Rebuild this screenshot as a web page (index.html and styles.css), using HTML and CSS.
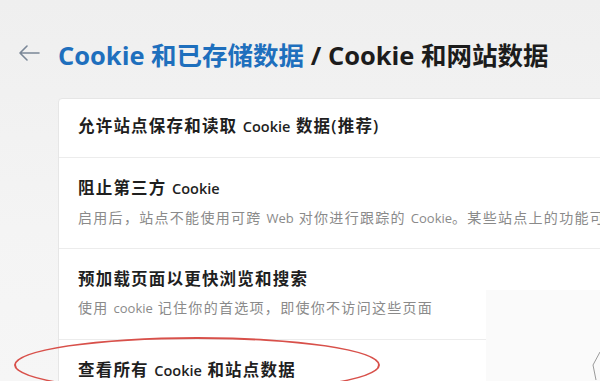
FILE: index.html
```html
<!DOCTYPE html>
<html lang="zh-CN">
<head>
<meta charset="utf-8">
<link rel="stylesheet" href="styles.css">
</head>
<body>
<div class="page">
  <header class="header">
    <svg class="back" width="22" height="16" viewBox="0 0 22 16"><path d="M9 1 L2 8 L9 15 M2 8 H21" fill="none" stroke="#7a8797" stroke-width="1.6" stroke-linecap="round" stroke-linejoin="round"/></svg>
    <h1 class="title"><span class="crumb">Cookie 和已存储数据</span> / Cookie 和网站数据</h1>
  </header>
  <section class="card">
    <div class="row row-single">
      <div class="row-title">允许站点保存和读取 <span class="en">Cookie</span> 数据(推荐)</div>
    </div>
    <div class="row">
      <div class="row-title">阻止第三方 <span class="en">Cookie</span></div>
      <div class="row-desc">启用后，站点不能使用可跨 <span class="en">Web</span> 对你进行跟踪的 <span class="en">Cookie</span>。某些站点上的功能可能会中断。</div>
    </div>
    <div class="row">
      <div class="row-title">预加载页面以更快浏览和搜索</div>
      <div class="row-desc">使用 <span class="en">cookie</span> 记住你的首选项，即使你不访问这些页面</div>
    </div>
    <div class="row row-single">
      <div class="row-title">查看所有 <span class="en">Cookie</span> 和站点数据</div>
    </div>
  </section>
</div>
<div class="overlay">
  <svg class="corner" width="10" height="30" viewBox="0 0 10 30"><path d="M10 1 L3 14 L6 29" fill="none" stroke="#9a9a9a" stroke-width="1"/></svg>
</div>
<div class="mark"></div>
</body>
</html>
```

FILE: styles.css
```css
html, body {
  margin: 0;
  padding: 0;
}
body {
  width: 600px;
  height: 381px;
  overflow: hidden;
  position: relative;
  background: linear-gradient(#efefef, #f4f4f4 60%, #f6f6f6);
  font-family: "Open Sans", "Noto Sans CJK SC", sans-serif;
  color: #1b1b1b;
}
.page {
  padding-top: 36px;
  overflow: hidden;
}
.header {
  display: flex;
  align-items: center;
  height: 34px;
  padding-left: 18px;
}
.back {
  flex: none;
}
.title {
  margin: 0 0 0 18px;
  font-size: 25.5px;
  font-weight: 700;
  white-space: nowrap;
  color: #1c1c1c;
}
.crumb {
  color: #1e6fbd;
}
.card {
  margin: 28px -40px 0 58px;
  background: #fff;
  border: 1px solid #e6e6e6;
  border-radius: 4px;
}
.row {
  padding: 19px 20px 0 19px;
  height: 71px;
  border-top: 1px solid #ececec;
  white-space: nowrap;
  overflow: hidden;
}
.row:first-child {
  border-top: none;
  padding-top: 16px;
  height: 42px;
}
.row-single {
  height: 39px;
}
.row-title {
  font-size: 16.5px;
  letter-spacing: 1.2px;
  font-weight: 600;
  line-height: 22px;
  color: #1f1f1f;
}
.row-title .en {
  font-size: 14.5px;
  letter-spacing: 0;
}
.row-desc {
  margin-top: 8px;
  font-size: 14px;
  letter-spacing: 1.3px;
  line-height: 20px;
  color: #8a8a8a;
}
.row-desc .en {
  font-size: 13px;
  letter-spacing: 0;
}
.overlay {
  position: absolute;
  left: 486px;
  top: 290px;
  width: 114px;
  height: 91px;
  background: #fafafa;
  display: flex;
  justify-content: flex-end;
  align-items: flex-end;
}
.mark {
  position: absolute;
  left: 14px;
  top: 337px;
  width: 366px;
  height: 56px;
  border: 2px solid #d8504a;
  border-radius: 50%;
  box-sizing: border-box;
}
```
